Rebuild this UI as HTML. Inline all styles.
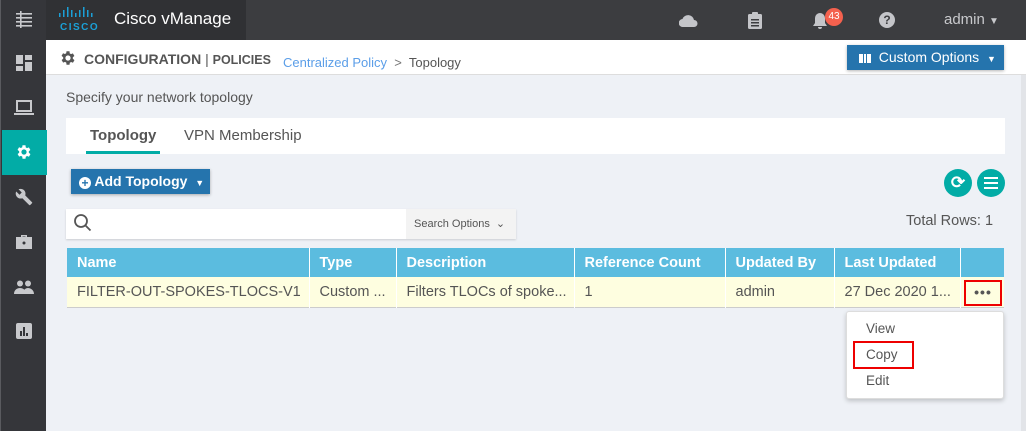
<!DOCTYPE html>
<html><head><meta charset="utf-8"><style>
*{box-sizing:border-box;margin:0;padding:0}
body{width:1026px;height:431px;overflow:hidden;background:#eef1f6;font-family:"Liberation Sans",sans-serif;position:relative;color:#555}
.abs{position:absolute}
.side{left:0;top:0;width:46px;height:431px;background:#35363a;border-left:1px solid #5a5b5f}
.top{left:46px;top:0;width:980px;height:40px;background:#3c3d40}
.logo{left:46px;top:0;width:200px;height:40px;background:#303134}
.ico{position:absolute;left:0;width:46px;text-align:center;color:#c8c9cc}
.hdr{left:46px;top:40px;width:980px;height:35px;background:#fff;border-bottom:1px solid #ddd}
th,td{text-align:left;font-size:14.5px;padding:0 10px;white-space:nowrap;overflow:hidden}
</style></head><body>
<div class="abs side">
 <svg class="abs" style="left:14px;top:10px" width="18" height="18" viewBox="0 0 18 18" fill="#c8c9cc"><rect x="1" y="3" width="16" height="1.6"/><rect x="1" y="7" width="16" height="1.6"/><rect x="1" y="11" width="16" height="1.6"/><rect x="1" y="15" width="16" height="1.6"/><rect x="5" y="1" width="1.6" height="17"/></svg>
 <svg class="abs" style="left:15px;top:55px" width="16" height="16" fill="#c8c9cc"><rect x="0" y="0" width="7" height="9"/><rect x="9" y="0" width="7" height="5"/><rect x="0" y="11" width="7" height="5"/><rect x="9" y="7" width="7" height="9"/></svg>
 <svg class="abs" style="left:13px;top:100px" width="20" height="16" fill="none" stroke="#c8c9cc" stroke-width="2"><rect x="3" y="1" width="14" height="10"/><path d="M0 14h20"/></svg>
 <div class="abs" style="left:1px;top:130px;width:45px;height:45px;background:#02aca6"></div>
 <svg class="abs" style="left:14px;top:143px" width="18" height="18" viewBox="0 0 24 24" fill="#fff"><path d="M19.4 13a7.5 7.5 0 000-2l2.1-1.6-2-3.5-2.5 1a7 7 0 00-1.7-1L15 3h-4l-.4 2.7a7 7 0 00-1.7 1l-2.5-1-2 3.5L6.6 11a7.5 7.5 0 000 2l-2.1 1.6 2 3.5 2.5-1a7 7 0 001.7 1L11 21h4l.4-2.7a7 7 0 001.7-1l2.5 1 2-3.5zM13 15.5a3.5 3.5 0 110-7 3.5 3.5 0 010 7z" transform="translate(-1 0)"/></svg>
 <svg class="abs" style="left:14px;top:188px" width="18" height="18" viewBox="0 0 24 24" fill="#c8c9cc"><path d="M22.7 19l-9.1-9.1c.9-2.3.4-5-1.5-6.9-2-2-5-2.4-7.4-1.3L9 6 6 9 1.6 4.7C.4 7.1.9 10.1 2.9 12.1c1.9 1.9 4.6 2.4 6.9 1.5l9.1 9.1c.4.4 1 .4 1.4 0l2.3-2.3c.5-.4.5-1.1.1-1.4z"/></svg>
 <svg class="abs" style="left:15px;top:234px" width="16" height="15" fill="#c8c9cc"><path d="M5 3V1h6v2h5v12H0V3zM6.5 2.5v.5h3v-.5z"/><circle cx="8" cy="9" r="1.5" fill="#35363a"/></svg>
 <svg class="abs" style="left:13px;top:280px" width="20" height="14" fill="#c8c9cc"><circle cx="6" cy="3.5" r="3"/><circle cx="14" cy="3.5" r="3"/><path d="M0 14c0-4 3-6 6-6s6 2 6 6zM9 14c0-4 2.5-6 5-6s6 2 6 6z"/></svg>
 <svg class="abs" style="left:15px;top:323px" width="16" height="16" fill="#c8c9cc"><rect width="16" height="16" rx="2"/><rect x="4" y="8" width="2" height="5" fill="#35363a"/><rect x="7" y="4" width="2" height="9" fill="#35363a"/><rect x="10" y="10" width="2" height="3" fill="#35363a"/></svg>
</div>
<div class="abs top"></div>
<div class="abs logo">
 <svg class="abs" style="left:12px;top:6px" width="44" height="26" fill="#1ba0d7"><rect x="1" y="7" width="1.5" height="4"/><rect x="5" y="4" width="1.5" height="7"/><rect x="9" y="1" width="1.5" height="10"/><rect x="13" y="4" width="1.5" height="7"/><rect x="17" y="7" width="1.5" height="4"/><rect x="21" y="4" width="1.5" height="7"/><rect x="25" y="1" width="1.5" height="10"/><rect x="29" y="4" width="1.5" height="7"/><rect x="33" y="7" width="1.5" height="4"/><text x="2" y="24" font-family="Liberation Sans" font-weight="bold" font-size="10" letter-spacing="1.5">CISCO</text></svg>
 <div class="abs" style="left:68px;top:9px;color:#fff;font-size:17px">Cisco vManage</div>
</div>
<svg class="abs" style="left:679px;top:13px" width="20" height="14" fill="#c4c5c9"><path d="M4 14a4 4 0 01-.5-8 6 6 0 0111.5 1 3.5 3.5 0 010 7z"/></svg>
<svg class="abs" style="left:748px;top:12px" width="14" height="17" fill="#c4c5c9"><rect y="2" width="14" height="15" rx="1.5"/><rect x="4" y="0" width="6" height="4" rx="1"/><rect x="3" y="7" width="8" height="1.5" fill="#3c3d40"/><rect x="3" y="10" width="8" height="1.5" fill="#3c3d40"/><rect x="3" y="13" width="8" height="1.5" fill="#3c3d40"/></svg>
<svg class="abs" style="left:813px;top:12px" width="14" height="17" fill="#c4c5c9"><path d="M7 1a5 5 0 00-5 5v5l-2 3h14l-2-3V6a5 5 0 00-5-5zM5 15a2 2 0 004 0z"/></svg>
<div class="abs" style="left:825px;top:8px;width:18px;height:18px;border-radius:9px;background:#f4614e;color:#fff;font-size:10px;text-align:center;line-height:18px">43</div>
<div class="abs" style="left:879px;top:12px;width:16px;height:16px;border-radius:8px;background:#c4c5c9;color:#3c3d40;font-size:12px;font-weight:bold;text-align:center;line-height:16px">?</div>
<div class="abs" style="left:944px;top:11px;color:#c8c9cc;font-size:15px">admin <span style="font-size:10px">▼</span></div>

<div class="abs hdr"></div>
<svg class="abs" style="left:59px;top:49px" width="18" height="18" viewBox="0 0 24 24" fill="#555"><path d="M19.4 13a7.5 7.5 0 000-2l2.1-1.6-2-3.5-2.5 1a7 7 0 00-1.7-1L15 3h-4l-.4 2.7a7 7 0 00-1.7 1l-2.5-1-2 3.5L6.6 11a7.5 7.5 0 000 2l-2.1 1.6 2 3.5 2.5-1a7 7 0 001.7 1L11 21h4l.4-2.7a7 7 0 001.7-1l2.5 1 2-3.5zM13 15.5a3.5 3.5 0 110-7 3.5 3.5 0 010 7z" transform="translate(-1 0)"/></svg>
<div class="abs" style="left:84px;top:51px;font-size:14px;font-weight:bold;color:#555">CONFIGURATION <span style="font-weight:normal">|</span> <span style="font-size:12.5px">POLICIES</span></div>
<div class="abs" style="left:283px;top:55px;font-size:13px;color:#5b9ee8">Centralized Policy &nbsp;<span style="color:#777">&gt;</span>&nbsp; <span style="color:#555">Topology</span></div>
<div class="abs" style="left:847px;top:45px;width:157px;height:25px;background:#2574ad;color:#fff;font-size:14px;line-height:25px;box-shadow:0 1px 3px rgba(0,0,0,.3)">
 <span style="display:inline-block;margin-left:12px;width:12px;height:9px;border-left:2px solid #fff;border-right:2px solid #fff;background:repeating-linear-gradient(90deg,#fff 0 2px,transparent 2px 3px);vertical-align:-1px"></span>&nbsp; Custom Options &nbsp;<span style="font-size:9px">▼</span></div>

<div class="abs" style="left:66px;top:89px;font-size:14px;color:#555">Specify your network topology</div>
<div class="abs" style="left:66px;top:118px;width:939px;height:36px;background:#fff"></div>
<div class="abs" style="left:90px;top:127px;font-size:15px;font-weight:bold;color:#555">Topology</div>
<div class="abs" style="left:86px;top:151px;width:74px;height:3px;background:#02aca6"></div>
<div class="abs" style="left:184px;top:127px;font-size:15px;color:#555">VPN Membership</div>

<div class="abs" style="left:71px;top:169px;width:139px;height:25px;background:#2574ad;color:#fff;font-size:14px;font-weight:bold;line-height:25px;box-shadow:0 1px 3px rgba(0,0,0,.3)"><span style="display:inline-block;margin-left:8px;width:12px;height:12px;border-radius:6px;background:#fff;color:#2574ad;font-size:12px;line-height:12px;text-align:center;vertical-align:-1px">+</span> Add Topology &nbsp;<span style="font-size:9px">▼</span></div>
<div class="abs" style="left:944px;top:169px;width:28px;height:28px;border-radius:14px;background:#02aca6;color:#fff;font-size:17px;text-align:center;line-height:28px;font-weight:bold">⟳</div>
<div class="abs" style="left:977px;top:169px;width:28px;height:28px;border-radius:14px;background:#02aca6"><div style="position:absolute;left:7px;top:8px;width:14px;height:12px;border-top:2px solid #fff;border-bottom:2px solid #fff"></div><div style="position:absolute;left:7px;top:13px;width:14px;height:2px;background:#fff"></div></div>

<div class="abs" style="left:66px;top:209px;width:450px;height:30px;background:#fff;box-shadow:0 1px 2px rgba(0,0,0,.15)"></div>
<svg class="abs" style="left:73px;top:213px" width="20" height="20" fill="none" stroke="#555" stroke-width="1.8"><circle cx="8" cy="8" r="6"/><path d="M12.5 12.5l5 5"/></svg>
<div class="abs" style="left:406px;top:209px;width:110px;height:30px;background:#f3f3f3;font-size:11px;line-height:30px;padding-left:8px;color:#555">Search Options &nbsp;⌄</div>
<div class="abs" style="left:906px;top:213px;font-size:14.5px;color:#555">Total Rows: 1</div>

<table class="abs" style="left:67px;top:248px;width:937px;border-collapse:collapse;table-layout:fixed">
<colgroup><col style="width:242px"><col style="width:87px"><col style="width:178px"><col style="width:151px"><col style="width:109px"><col style="width:126px"><col style="width:44px"></colgroup>
<tr style="background:#5bbcdf;color:#fff;height:29px"><th style="border-right:1px solid #fff">Name</th><th style="border-right:1px solid #fff">Type</th><th style="border-right:1px solid #fff">Description</th><th style="border-right:1px solid #fff">Reference Count</th><th style="border-right:1px solid #fff">Updated By</th><th style="border-right:1px solid #fff">Last Updated</th><th></th></tr>
<tr style="background:#fefee0;height:30px;border-bottom:1px solid #ccc;color:#555"><td style="border-right:1px solid #fff">FILTER-OUT-SPOKES-TLOCS-V1</td><td style="border-right:1px solid #fff">Custom ...</td><td style="border-right:1px solid #fff;padding-right:0">Filters TLOCs of spoke...</td><td style="border-right:1px solid #fff">1</td><td style="border-right:1px solid #fff">admin</td><td style="border-right:1px solid #fff;padding-right:0">27 Dec 2020 1...</td><td></td></tr>
</table>
<div class="abs" style="left:964px;top:280px;width:38px;height:26px;border:2px solid #e00;text-align:center;font-size:14px;line-height:20px;color:#555;font-weight:bold;letter-spacing:1px">•••</div>

<div class="abs" style="left:846px;top:311px;width:158px;height:88px;background:#fff;border:1px solid #ddd;border-radius:3px;box-shadow:0 2px 5px rgba(0,0,0,.2)"></div>
<div class="abs" style="left:866px;top:321px;font-size:13.5px;color:#555">View</div>
<div class="abs" style="left:853px;top:341px;width:61px;height:28px;border:2px solid #e00"></div>
<div class="abs" style="left:866px;top:347px;font-size:13.5px;color:#555">Copy</div>
<div class="abs" style="left:866px;top:373px;font-size:13.5px;color:#555">Edit</div>
<div class="abs" style="left:1021px;top:75px;width:5px;height:356px;background:#e2e4e8"></div>
</body></html>
